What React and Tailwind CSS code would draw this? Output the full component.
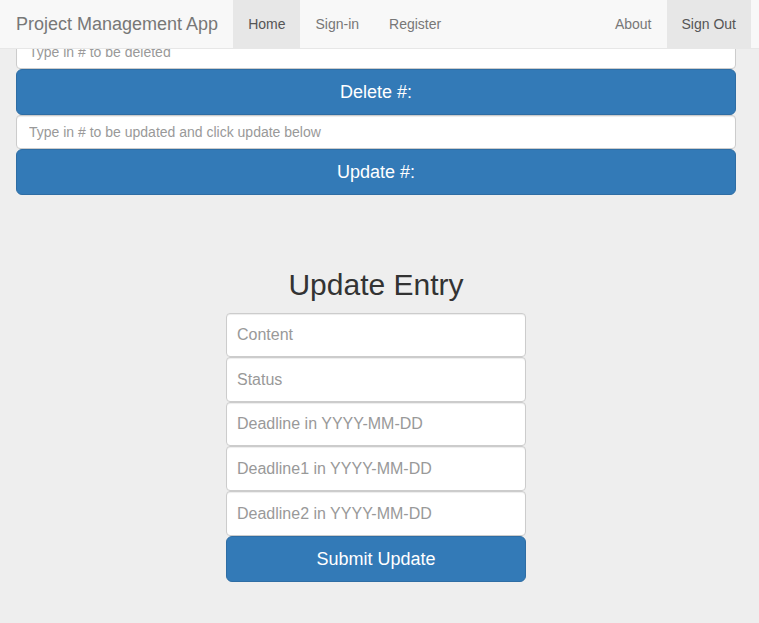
import React from "react";

const font = { fontFamily: '"Liberation Sans", Arial, sans-serif' };

export default function App() {
  const inp =
    "block w-full rounded-[4px] border border-[#cccccc] bg-white text-[16px] leading-[22.86px] px-[10px] text-[#555] placeholder:text-[#999] outline-none shadow-[inset_0_1px_1px_rgba(0,0,0,0.075)]";
  const smallInp =
    "block w-full h-[34px] rounded-[4px] border border-[#cccccc] bg-white text-[14px] px-[12px] text-[#555] placeholder:text-[#999] outline-none shadow-[inset_0_1px_1px_rgba(0,0,0,0.075)]";
  const btn =
    "block w-full h-[46px] rounded-[6px] border border-[#2e6da4] bg-[#337ab7] text-white text-[18px] text-center";
  return (
    <div className="min-h-[623px] bg-[#eeeeee] text-[#333]" style={font}>
      <nav className="fixed top-0 left-0 right-0 z-10 h-[49px] border-b border-[#e7e7e7] bg-[#f8f8f8] flex items-stretch justify-between pr-[8px]">
        <div className="flex items-stretch">
          <span className="flex items-center pl-[16px] pr-[15px] text-[18px] text-[#777]">
            Project Management App
          </span>
          <span className="flex items-center px-[15px] text-[14px] text-[#555] bg-[#e7e7e7]">Home</span>
          <span className="flex items-center px-[15px] text-[14px] text-[#777]">Sign-in</span>
          <span className="flex items-center px-[15px] text-[14px] text-[#777]">Register</span>
        </div>
        <div className="flex items-stretch">
          <span className="flex items-center px-[15px] text-[14px] text-[#777]">About</span>
          <span className="flex items-center px-[15px] text-[14px] text-[#555] bg-[#e7e7e7]">Sign Out</span>
        </div>
      </nav>

      <div className="w-[752px]">
        <div className="pt-[35px] px-[16px]">
          <input className={smallInp} placeholder="Type in # to be deleted" />
          <button className={btn}>Delete #:</button>
          <input className={smallInp} placeholder="Type in # to be updated and click update below" />
          <button className={btn}>Update #:</button>
        </div>

        <div className="mt-[73px] flex flex-col items-center">
          <h2 className="text-[30px] leading-[33px] font-normal text-[#333] mb-[12px]">Update Entry</h2>
          <div className="w-[300px]">
            <input className={inp + " h-[44px]"} placeholder="Content" />
            <input className={inp + " h-[45px]"} placeholder="Status" />
            <input className={inp + " h-[44px]"} placeholder="Deadline in YYYY-MM-DD" />
            <input className={inp + " h-[45px]"} placeholder="Deadline1 in YYYY-MM-DD" />
            <input className={inp + " h-[45px]"} placeholder="Deadline2 in YYYY-MM-DD" />
            <button className={btn}>Submit Update</button>
          </div>
        </div>
      </div>
    </div>
  );
}
